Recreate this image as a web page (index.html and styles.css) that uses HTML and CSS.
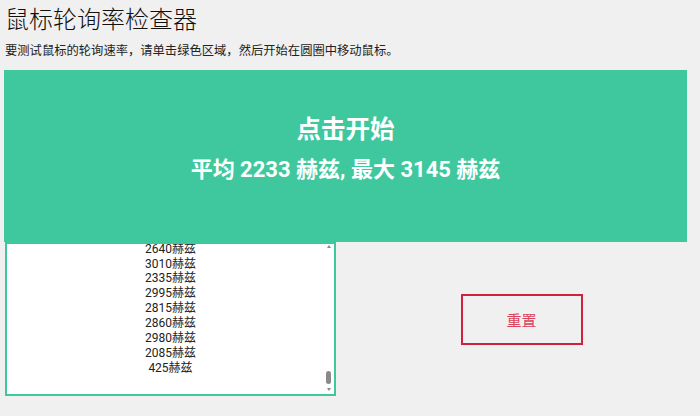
FILE: index.html
```html
<!DOCTYPE html>
<html lang="zh-CN">
<head>
    <meta charset="UTF-8">
    <meta name="viewport" content="width=device-width, initial-scale=1.0">
    <title>鼠标轮询率检查器</title>
    <link rel="stylesheet" href="styles.css">
</head>
<body>
<div class="page">

    <h1 class="title">鼠标轮询率检查器</h1>
    <p class="intro">要测试鼠标的轮询速率，请单击绿色区域，然后开始在圆圈中移动鼠标。</p>

    <!-- Click area -->
    <div class="pad" id="pad">
        <div class="pad-head">点击开始</div>
        <div class="pad-stats">平均 2233 赫兹, 最大 3145 赫兹</div>
    </div>

    <!-- Log + reset -->
    <div class="bottom">
        <div class="log-wrap">
            <textarea class="log" id="log" readonly>1880赫兹
2410赫兹
2750赫兹
3145赫兹
2640赫兹
3010赫兹
2335赫兹
2995赫兹
2815赫兹
2860赫兹
2980赫兹
2085赫兹
425赫兹
</textarea>
            <!-- thin scrollbar drawn over the log -->
            <span class="sb-up"></span>
            <span class="sb-thumb"></span>
            <span class="sb-down"></span>
        </div>
        <div class="actions">
            <button class="reset">重置</button>
        </div>
    </div>

</div>
    <script>
        // keep the newest reading in view
        const log = document.getElementById("log");
        log.scrollTop = log.scrollHeight;
    </script>

</body>
</html>
```

FILE: styles.css
```css
body {
    margin: 0;
    background-color: #f0f0f0;
    font-family: Roboto, "Noto Sans CJK SC", sans-serif;
    color: #222;
}
.page {
    width: 683px;
    margin-left: 4px;
}
.title {
    margin: 5px 0 0 1px;
    font-size: 24px;
    font-weight: 300;
    line-height: 30px;
    color: #111;
}
.intro {
    margin: 6px 0 9px 1px;
    font-size: 12.3px;
    line-height: 20px;
}
/* green click area */
.pad {
    height: 172px;
    box-sizing: border-box;
    padding-top: 43px;
    background-color: #3fc89d;
    color: #fff;
    text-align: center;
    font-weight: 700;
}
.pad-head {
    font-size: 24.5px;
    line-height: 34px;
}
.pad-stats {
    margin-top: 8px;
    font-size: 22px;
    line-height: 30px;
}
/* readings + reset button */
.bottom {
    display: flex;
    align-items: center;
}
.log-wrap {
    position: relative;
    margin-left: 1px;
    height: 154px;
}
.log {
    display: block;
    width: 331px;
    height: 154px;
    box-sizing: border-box;
    margin: 0;
    padding: 0 2px 3px;
    border: 2px solid #3fc89d;
    background-color: #fff;
    color: #222;
    font-family: Roboto, "Noto Sans CJK SC", sans-serif;
    font-size: 12px;
    line-height: 14.9px;
    text-align: center;
    resize: none;
    outline: none;
}
.sb-up, .sb-down {
    position: absolute;
    right: 5px;
    width: 0;
    height: 0;
    border-left: 2.5px solid transparent;
    border-right: 2.5px solid transparent;
}
.sb-up {
    top: 3px;
    border-bottom: 3px solid #888;
}
.sb-down {
    bottom: 5px;
    border-top: 3px solid #888;
}
.sb-thumb {
    position: absolute;
    right: 5px;
    bottom: 12px;
    width: 5px;
    height: 13px;
    border-radius: 3px;
    background-color: #8a8a8a;
}
.actions {
    flex-grow: 1;
    display: flex;
    justify-content: center;
    padding-left: 20px;
}
.reset {
    width: 122px;
    height: 51px;
    border: 2px solid #d2203f;
    background: transparent;
    color: #d9435e;
    font-family: Roboto, "Noto Sans CJK SC", sans-serif;
    font-size: 15px;
    cursor: pointer;
}
```
